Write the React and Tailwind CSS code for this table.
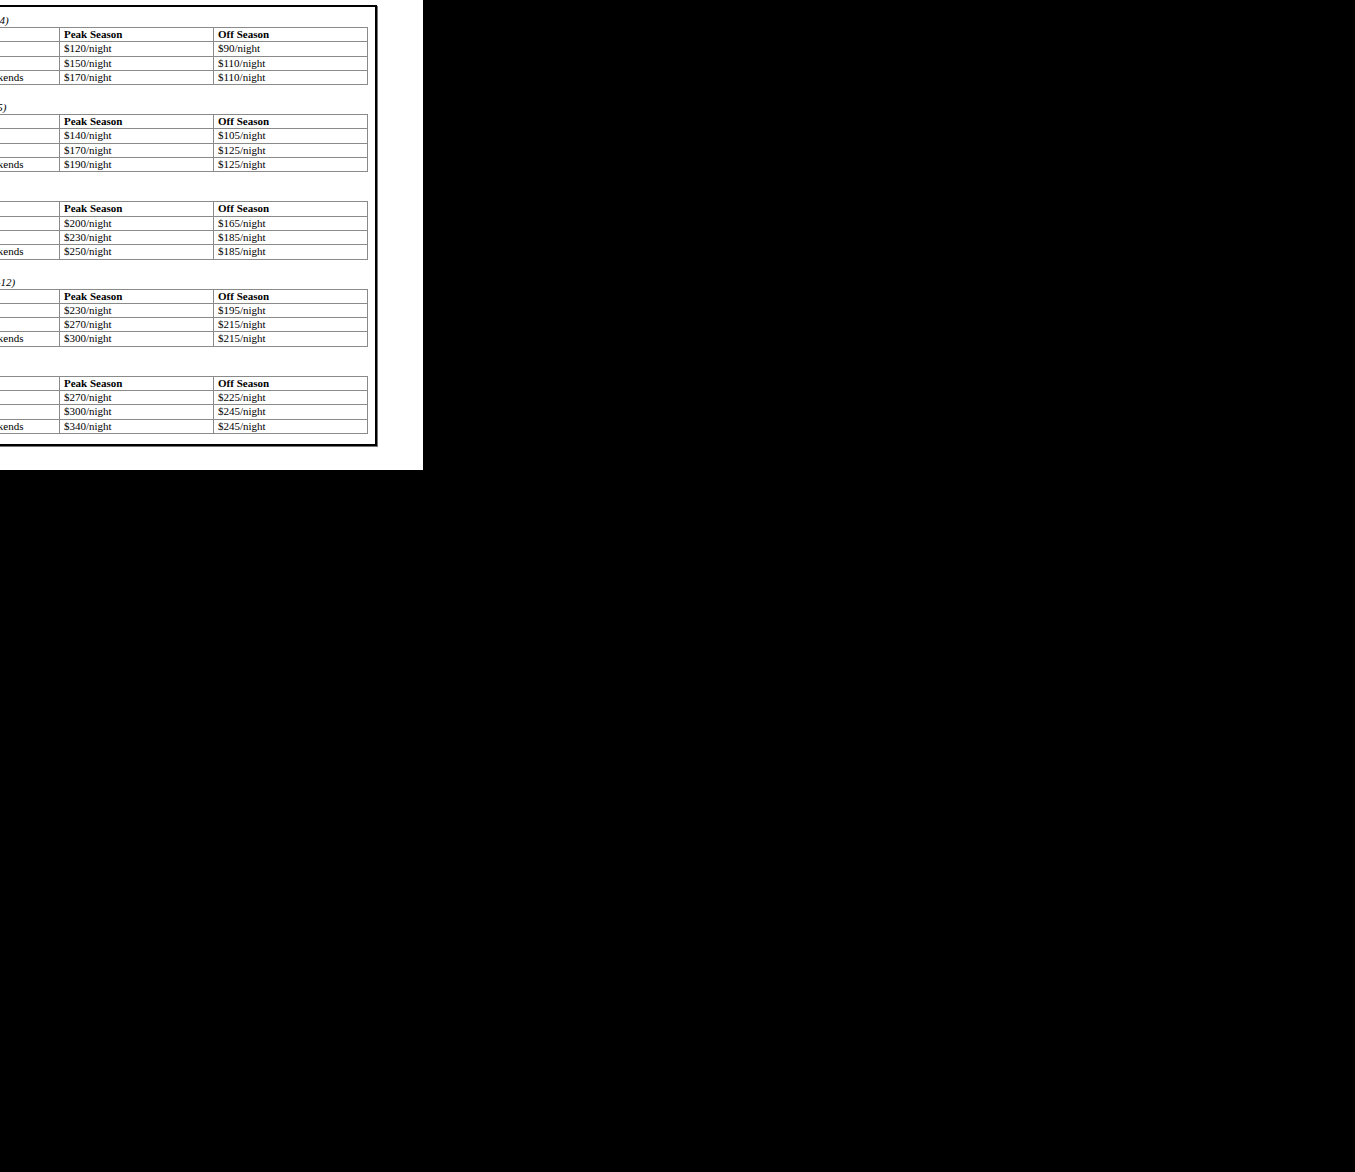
const sections = [
  {
    title: "Mini Room (sleeps 2-4)",
    rates: [
      ["Weekdays", "$120/night", "$90/night"],
      ["Weekends", "$150/night", "$110/night"],
      ["Holidays/Long Weekends", "$170/night", "$110/night"],
    ],
  },
  {
    title: "Deluxe (sleeps up to 5)",
    rates: [
      ["Weekdays", "$140/night", "$105/night"],
      ["Weekends", "$170/night", "$125/night"],
      ["Holidays/Long Weekends", "$190/night", "$125/night"],
    ],
  },
  {
    title: "Family Suite",
    rates: [
      ["Weekdays", "$200/night", "$165/night"],
      ["Weekends", "$230/night", "$185/night"],
      ["Holidays/Long Weekends", "$250/night", "$185/night"],
    ],
  },
  {
    title: "Lake Home (sleeps 8-12)",
    rates: [
      ["Weekdays", "$230/night", "$195/night"],
      ["Weekends", "$270/night", "$215/night"],
      ["Holidays/Long Weekends", "$300/night", "$215/night"],
    ],
  },
  {
    title: "Grand Chalet",
    rates: [
      ["Weekdays", "$270/night", "$225/night"],
      ["Weekends", "$300/night", "$245/night"],
      ["Holidays/Long Weekends", "$340/night", "$245/night"],
    ],
  },
];

function RateTable({ section, last }) {
  return (
    <div className={last ? "" : "mb-[16px]"}>
      <p className="h-[13px] text-[11px] leading-[13px] italic whitespace-nowrap">
        {section.title}
      </p>
      <table className="w-[463px] table-fixed border-collapse text-[11px]">
        <thead>
          <tr>
            <th className="w-1/3 border border-[#8a8a8a] pl-[4px] text-left font-bold leading-[13.3px]">
              Period
            </th>
            <th className="w-1/3 border border-[#8a8a8a] pl-[4px] text-left font-bold leading-[13.3px]">
              Peak Season
            </th>
            <th className="w-1/3 border border-[#8a8a8a] pl-[4px] text-left font-bold leading-[13.3px]">
              Off Season
            </th>
          </tr>
        </thead>
        <tbody>
          {section.rates.map((row) => (
            <tr key={row[0]}>
              {row.map((cell, i) => (
                <td
                  key={i}
                  className="border border-[#8a8a8a] pl-[4px] leading-[13.3px] whitespace-nowrap"
                >
                  {cell}
                </td>
              ))}
            </tr>
          ))}
        </tbody>
      </table>
    </div>
  );
}

export default function App() {
  return (
    <div className="min-h-screen bg-black">
      <div className="h-[470px] w-[423px] overflow-hidden bg-white pt-[5px] font-['Liberation_Serif',serif] text-black">
        <div className="ml-[-104px] w-[481px] border-2 border-black px-[7px] pt-[7px] pb-[10px] shadow-[1px_1px_0_#777]">
          {sections.map((s, i) => (
            <RateTable key={s.title} section={s} last={i === sections.length - 1} />
          ))}
        </div>
      </div>
    </div>
  );
}
